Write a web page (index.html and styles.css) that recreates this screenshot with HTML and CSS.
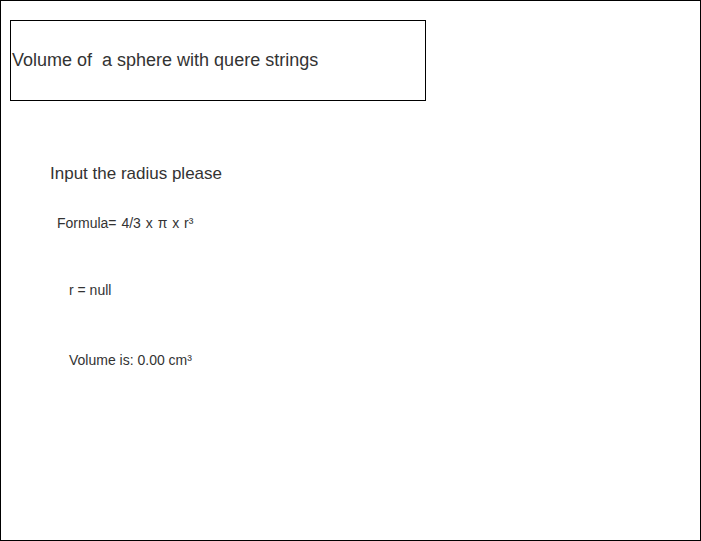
FILE: index.html
```html
<!DOCTYPE html>
<html>
<head>
<meta charset="utf-8">
<link rel="stylesheet" href="styles.css">
</head>
<body>
<div class="page">
  <div class="title">Volume of&nbsp; a sphere with quere strings</div>
  <div class="prompt">Input the radius please</div>
  <div class="formula">Formula= 4/3 x π x r³</div>
  <div class="radius">r = null</div>
  <div class="volume">Volume is: 0.00 cm³</div>
</div>
</body>
</html>
```
FILE: styles.css
```css
html, body {
  margin: 0;
  padding: 0;
  background: #fff;
}
.page {
  box-sizing: border-box;
  width: 701px;
  height: 541px;
  border: 1px solid #000;
  padding-top: 19px;
  display: flex;
  flex-direction: column;
  align-items: flex-start;
  font-family: "Liberation Sans", Arial, sans-serif;
  color: #333;
}
.title {
  box-sizing: border-box;
  width: 416px;
  height: 81px;
  margin-left: 9px;
  border: 1px solid #000;
  display: flex;
  align-items: center;
  padding-left: 1px;
  font-size: 18px;
}
.prompt {
  margin-left: 49px;
  margin-top: 63px;
  line-height: 20px;
  font-size: 17px;
}
.formula {
  margin-left: 56px;
  margin-top: 29px;
  line-height: 20px;
  font-size: 14px;
  word-spacing: 1px;
}
.radius {
  margin-left: 68px;
  margin-top: 47px;
  line-height: 20px;
  font-size: 14px;
}
.volume {
  margin-left: 68px;
  margin-top: 50px;
  line-height: 20px;
  font-size: 14px;
}
```
